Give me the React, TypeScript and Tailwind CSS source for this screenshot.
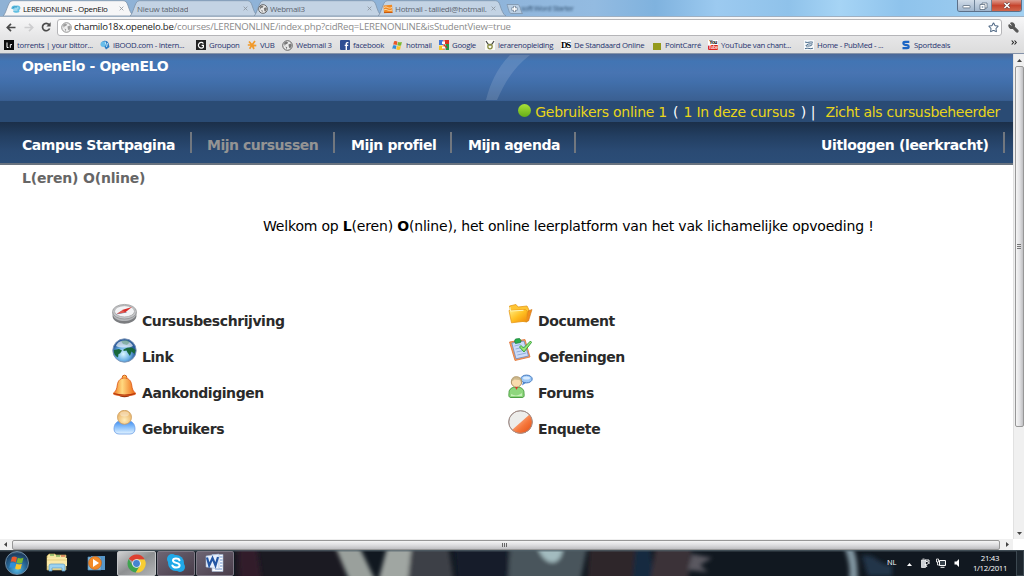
import React from "react";
import { Star, Wrench } from "lucide-react";

const ui = "font-['Open_Sans','Noto_Sans',sans-serif]";
const verdana = "font-['DejaVu_Sans',Verdana,sans-serif]";

/* ---------- small icons ---------- */

function GlobeIcon({ className = "size-[11px]" }: { className?: string }) {
  return (
    <svg viewBox="0 0 11 11" className={`shrink-0 ${className}`}>
      <circle cx="5.5" cy="5.5" r="4.8" fill="#e9e9e9" stroke="#555" strokeWidth="0.9" />
      <path d="M2 3l2-1.4 2 .6-.6 1.6-2 .6-.5 1.800zM6.400 4.400l2.600-.8.8 2-1.600 2.800-1.200-.8zM3.400 6.600l1.800.6-.4 2.200z" fill="#777" />
    </svg>
  );
}

function CloudFavicon() {
  return (
    <svg viewBox="0 0 10 10" className="size-[10px] shrink-0">
      <path d="M.5 4.500C0 2 3 .8 5 1.800c3-1 5 1.200 4.300 3L8 6.500C10 8 6 9.500 3.500 8.500 1.500 8 2 6.500 3 6z" fill="#62bfe2" />
      <path d="M3.500 4h4M2.500 6h4" stroke="#e3f6fc" strokeWidth="0.900" />
      <path d="M1 4.500C2 2.500 5 3 6 3" stroke="#2791bd" strokeWidth="0.900" fill="none" />
    </svg>
  );
}

function HotmailIcon() {
  return (
    <svg viewBox="0 0 10 10" className="size-[10px] shrink-0">
      <path d="M.5 1.500L9 .8l.6 7.700-8.600.7z" fill="#f08a24" />
      <path d="M1 3.500c3-2 4 2 8 0M1 6c3-2 4 2 8 0" stroke="#ffe2b8" strokeWidth="0.900" fill="none" />
      <path d="M1 8.500h8.500" stroke="#c65a12" strokeWidth="1" />
    </svg>
  );
}

function WindowsFlag({ className }: { className: string }) {
  return (
    <svg viewBox="0 0 12 12" className={`shrink-0 ${className}`}>
      <path d="M2.200 1.500C3.600.8 4.800 1 6 1.800L5.100 5.600C4 4.800 2.600 4.700 1.300 5.200z" fill="#e8582a" />
      <path d="M6.600 2.100c1.300.7 2.700.6 4.200 0L9.900 5.900c-1.500.6-2.900.5-4.200-.1z" fill="#7cb82f" />
      <path d="M1.100 5.900c1.400-.5 2.700-.4 3.800.4L4 10.100c-1.100-.8-2.400-.9-3.800-.4z" fill="#2f8ed8" />
      <path d="M5.500 6.500c1.300.7 2.800.7 4.200.1l-.9 3.800c-1.400.6-2.900.6-4.200-.2z" fill="#fbc42a" />
    </svg>
  );
}

const bookmarks: { label: string; box: string; icon: React.ReactNode }[] = [
  {
    label: "torrents | your bittor...",
    box: "w-[96px]",
    icon: (
      <svg viewBox="0 0 10 10" className="size-[10px] shrink-0">
        <rect width="10" height="10" fill="#0c0c0c" />
        <path d="M3 2.500v5h1.500M6.300 7.800V4.600h1.700" stroke="#fff" fill="none" strokeWidth="1" />
      </svg>
    ),
  },
  {
    label: "iBOOD.com - Intern...",
    box: "w-[96px]",
    icon: (
      <svg viewBox="0 0 10 10" className="size-[10px] shrink-0">
        <path d="M1 4a4 4 0 0 1 7.500-1L9.500 7 6 9.500 4.500 7z" fill="#2d7cc4" />
        <circle cx="3.200" cy="4.200" r="2.700" fill="#67bdea" />
        <path d="M5 1.500l1 3M7.500 3l-1 4" stroke="#d8f0fc" strokeWidth="0.900" />
      </svg>
    ),
  },
  {
    label: "Groupon",
    box: "w-[51px]",
    icon: (
      <svg viewBox="0 0 10 10" className="size-[10px] shrink-0">
        <rect width="10" height="10" fill="#222" />
        <path d="M7.400 3.500A2.800 2.800 0 1 0 7.400 7V5.300H5.600" stroke="#fff" fill="none" strokeWidth="1.200" />
      </svg>
    ),
  },
  {
    label: "VUB",
    box: "w-[35px]",
    icon: (
      <svg viewBox="0 0 10 10" className="size-[10px] shrink-0">
        <path d="M5 5L2 1.500M5 5l3-4M5 5H.8M5 5l4.300.6M5 5L2.600 8.800M5 5l2 4" stroke="#f19a2b" strokeWidth="1.700" />
      </svg>
    ),
  },
  { label: "Webmail 3", box: "w-[58px]", icon: <GlobeIcon /> },
  {
    label: "facebook",
    box: "w-[52px]",
    icon: (
      <svg viewBox="0 0 10 10" className="size-[10px] shrink-0">
        <rect width="10" height="10" rx="1" fill="#2f4f93" />
        <path d="M8.400 2.600H7.300q-1 0-1 1V10M4.700 5.400h3.500" stroke="#fff" fill="none" strokeWidth="1.400" />
      </svg>
    ),
  },
  { label: "hotmail", box: "w-[47px]", icon: <WindowsFlag className="size-[11px]" /> },
  {
    label: "Google",
    box: "w-[46px]",
    icon: (
      <svg viewBox="0 0 10 10" className="size-[10px] shrink-0">
        <path d="M0 0h10v10H0z" fill="#fff" />
        <path d="M0 0h4v5H0z" fill="#3f74d6" />
        <path d="M6 0h4v4H6z" fill="#d83223" />
        <path d="M0 5.500h4V10H0z" fill="#f2c324" />
        <path d="M6.500 4H10v6H6.500z" fill="#229a48" />
        <path d="M5 0v10M5 5l3 3" stroke="#d83223" strokeWidth="1.200" />
        <path d="M3 1.500h3v2.500H3zM3 6.500h3v2H3z" fill="#fff" />
      </svg>
    ),
  },
  {
    label: "lerarenopleiding",
    box: "w-[76px]",
    icon: (
      <svg viewBox="0 0 10 10" className="size-[10px] shrink-0">
        <rect width="10" height="10" fill="#fbfbf5" />
        <path d="M1 1l2 3 2 1 2-1 2-3" stroke="#444" fill="none" strokeWidth="1.200" />
        <circle cx="5" cy="6.600" r="2.200" fill="none" stroke="#8c8f40" strokeWidth="1.300" />
      </svg>
    ),
  },
  {
    label: "De Standaard Online",
    box: "w-[91px]",
    icon: (
      <span className="w-[10px] shrink-0 bg-white font-['Liberation_Serif',serif] text-[9px] leading-[10px] font-bold tracking-[-1.2px] text-black">
        DS
      </span>
    ),
  },
  {
    label: "PointCarré",
    box: "w-[56px]",
    icon: <span className="mt-[2px] mr-px ml-px h-[7px] w-[8px] shrink-0 bg-[#949a1c]" />,
  },
  {
    label: "YouTube van chant...",
    box: "w-[96px]",
    icon: (
      <span className="flex w-[10px] shrink-0 flex-col items-center overflow-hidden bg-white font-['Liberation_Sans',sans-serif] text-[5px] leading-[5px] font-bold tracking-[-0.5px] text-black">
        <span>You</span>
        <span className="w-full rounded-[1px] bg-[#d7261e] text-center text-[#ffd9d6]">Tube</span>
      </span>
    ),
  },
  {
    label: "Home - PubMed - ...",
    box: "w-[97px]",
    icon: (
      <svg viewBox="0 0 10 10" className="size-[10px] shrink-0">
        <rect width="10" height="10" fill="#f5f8fa" />
        <path d="M1 2c3 1.500 5-1 8 .3M8.500 4C6 3.500 2.500 4 1.800 6M8.200 4.500C7 6.500 4 6 2 6M1 8.700c3-1.500 5 1 8-.5" stroke="#4a6c8c" fill="none" strokeWidth="1" />
      </svg>
    ),
  },
  {
    label: "Sportdeals",
    box: "w-[60px]",
    icon: (
      <svg viewBox="0 0 10 10" className="size-[10px] shrink-0">
        <path d="M8.300 1.900H4C1.800 1.900 1.800 4.600 4 4.800l2 .3c2.300.3 2.200 3.100 0 3.100H1.500" stroke="#1d66c4" fill="none" strokeWidth="2.200" />
      </svg>
    ),
  },
];

/* ---------- browser chrome ---------- */

function Tab({ title, icon, active, box, text }: { title: string; icon?: React.ReactNode; active?: boolean; box: string; text: string }) {
  return (
    <div className={`relative h-full shrink-0 ${box}`}>
      <svg viewBox="0 0 132 16" preserveAspectRatio="none" className="absolute inset-0 size-full">
        <path
          d="M0 16C3 14 5 2.500 8 1.200L10 .7H121c3 0 4 2 5 5s3 9 6 10.300z"
          fill={active ? "#f6f6f7" : "#c3d3e4"}
          stroke="#7d93aa"
          strokeWidth="0.800"
        />
      </svg>
      <div className={`relative flex h-full items-center pt-px ${text}`}>
        {icon}
        <span className={`ml-[2px] overflow-hidden text-[8px] leading-[12px] whitespace-nowrap ${active ? "text-[#111]" : "text-[#5c6570]"}`}>{title}</span>
        <svg viewBox="0 0 6 6" className="mr-[10px] ml-auto size-[5px] shrink-0">
          <path d="M.8.8l4.400 4.400M5.200.8L.8 5.200" stroke="#8c949c" strokeWidth="1" />
        </svg>
      </div>
    </div>
  );
}

function TitleBar() {
  return (
    <div className="flex h-[16px] shrink-0 items-stretch overflow-hidden bg-[linear-gradient(90deg,#8fb2d5_0%,#8fb4da_48%,#93bbe1_58%,#7fb2de_64%,#9ccaf0_70%,#8fc2ea_77%,#a6d4f5_82%,#8ec3ec_88%,#a3d0f1_100%)]">
      <div className="relative z-10 flex pl-[3px]">
        <Tab active box="w-[131px]" text="pl-[8px] tracking-[-0.34px]" icon={<CloudFavicon />} title="LERENONLINE - OpenElo" />
        <Tab box="-ml-[4px] w-[128px]" text="pl-[5px] tracking-[-0.22px]" title="Nieuw tabblad" />
        <Tab box="-ml-[4px] w-[128px]" text="pl-[4px] tracking-[-0.32px]" icon={<GlobeIcon className="size-[10px]" />} title="Webmail3" />
        <Tab box="-ml-[4px] w-[128px]" text="pl-[5px] tracking-[-0.26px]" icon={<HotmailIcon />} title="Hotmail - talliedi@hotmail." />
        <svg viewBox="0 0 17 10" className="mt-[4px] h-[10px] w-[17px]">
          <path d="M1 .5h11c2 0 3 8 4.500 9H5C3 9.500 2 3 1 .5z" fill="#b8cee4" stroke="#7d93aa" strokeWidth="0.800" />
          <path d="M8.500 2v6M5.500 5h6" stroke="#6b7c90" strokeWidth="2.800" />
          <path d="M8.500 2.500v5M6 5h5" stroke="#fff" strokeWidth="1.500" />
        </svg>
      </div>
      <span className="mt-[2px] -ml-[2px] text-[7.500px] leading-[12px] font-semibold tracking-[-0.6px] whitespace-nowrap text-[#31506f] opacity-75 blur-[1.2px]">soft Word Starter</span>
      <div className="mr-[2px] ml-auto flex h-[12px] overflow-hidden rounded-b-[3px] border border-t-0 border-[#5c7089] text-white">
        <div className="flex w-[17px] items-center justify-center border-r border-[#6f8398] bg-gradient-to-b from-[#d2dde9] to-[#a0b5cc]">
          <svg viewBox="0 0 9 6" className="h-[6px] w-[9px]"><rect x="1" y="2.500" width="7" height="2.400" rx=".5" fill="#fff" stroke="#4b5b70" strokeWidth=".7" /></svg>
        </div>
        <div className="flex w-[17px] items-center justify-center border-r border-[#6f8398] bg-gradient-to-b from-[#d2dde9] to-[#a0b5cc]">
          <svg viewBox="0 0 9 8" className="h-[8px] w-[9px]"><path d="M3 1h5v5H3z" fill="#fff" stroke="#4b5b70" strokeWidth=".7" /><path d="M1 2.500h5v5H1z" fill="#fff" stroke="#4b5b70" strokeWidth=".7" /><path d="M2.700 4.200h1.600v1.600H2.700z" fill="#8196ae" /></svg>
        </div>
        <div className="flex w-[29px] items-center justify-center bg-gradient-to-b from-[#dc9a8d] via-[#c6442e] to-[#d0664c]">
          <svg viewBox="0 0 8 7" className="h-[7px] w-[8px]"><path d="M1.500 1l5 5M6.500 1l-5 5" stroke="#5d3a3a" strokeWidth="2.700" /><path d="M1.500 1l5 5M6.500 1l-5 5" stroke="#fff" strokeWidth="1.600" /></svg>
        </div>
      </div>
    </div>
  );
}

function Toolbar() {
  return (
    <div className="flex h-[21px] shrink-0 items-center border-t border-[#9fb0c2] bg-gradient-to-b from-[#f7f7f8] to-[#e6e6e7] pl-[6px]">
      <svg viewBox="0 0 10 9" className="h-[9px] w-[10px]"><path d="M9.500 4.500H1.500M5 .8L1.300 4.500 5 8.200" fill="none" stroke="#4a4a4a" strokeWidth="1.700" /></svg>
      <svg viewBox="0 0 10 9" className="ml-[8px] h-[9px] w-[10px]"><path d="M.5 4.500h8M5 .8l3.700 3.700L5 8.200" fill="none" stroke="#cdcdcf" strokeWidth="1.700" /></svg>
      <svg viewBox="0 0 10 10" className="ml-[7px] size-[10px]"><path d="M8 2.600A3.700 3.700 0 1 0 8.600 6.500" fill="none" stroke="#4a4a4a" strokeWidth="1.700" /><path d="M9.600.3v4.200H5.400z" fill="#4a4a4a" /></svg>
      <div className="ml-[6px] flex h-[17px] w-[945px] items-center rounded-[3px] border border-[#b5b5b8] bg-white pl-[3px]">
        <GlobeIcon className="size-[11px] opacity-70" />
        <span className="ml-[2px] text-[9.600px] leading-[14px] tracking-[-0.21px] whitespace-nowrap text-[#8b8b8b]">
          <span className="text-[#1c1c1c]">chamilo18x.openelo.be</span>/courses/LERENONLINE/index.php?cidReq=LERENONLINE&amp;isStudentView=true
        </span>
        <Star className="mr-[2px] ml-auto size-[11px] text-[#526a86]" strokeWidth={2.2} />
      </div>
      <Wrench className="ml-[6px] size-[11px] -scale-x-100 fill-[#555] text-[#555]" strokeWidth={2.5} />
    </div>
  );
}

function BookmarksBar() {
  return (
    <div className="flex h-[17px] shrink-0 items-center border-b border-[#8492a8] bg-gradient-to-b from-[#e6e6e7] to-[#dcdcdc] pl-[4px]">
      {bookmarks.map((b) => (
        <div key={b.label} className={`flex shrink-0 items-center gap-[3px] ${b.box}`}>
          {b.icon}
          <span className="text-[7.800px] leading-[11px] tracking-[-0.28px] whitespace-nowrap text-[#26336f]">{b.label}</span>
        </div>
      ))}
      <svg viewBox="0 0 6 5" className="mr-[7px] mb-[6px] ml-auto h-[5px] w-[6px]">
        <path d="M.7.500l1.800 2L.7 4.500M3.500.5l1.800 2-1.800 2" fill="none" stroke="#222" strokeWidth="1.100" />
      </svg>
    </div>
  );
}

/* ---------- page ---------- */

function NavItem({ children, box, muted }: { children: React.ReactNode; box: string; muted?: boolean }) {
  return (
    <div className={`h-[21px] shrink-0 border-r-2 border-[#71777f] pt-[5px] leading-[17px] whitespace-nowrap ${box} ${muted ? "text-[#949494]" : "text-white"}`}>{children}</div>
  );
}

function PageHeader() {
  return (
    <header className="text-[14px] font-bold">
      <div className="relative h-[47px] bg-[linear-gradient(180deg,#4b6796_0%,#4275b4_15%,#4874b2_40%,#416fab_60%,#3b6092_98%,#335a8e_100%)] pt-[4px] pl-[22px] text-white">
        <svg viewBox="0 0 60 47" className="absolute top-0 left-[480px] h-[47px] w-[60px]">
          <path d="M6 46C10 30 17 14 30 1H50C34 13 25 28 17 46z" fill="#fff" opacity=".13" />
        </svg>
        <div className="leading-[17px] tracking-[-0.35px] whitespace-nowrap">OpenElo - OpenELO</div>
      </div>
      <div className="flex h-[21px] items-center justify-end bg-[#2a4b74] pt-px pr-[13px] text-[14px] font-normal whitespace-pre text-[#e9d51a]">
        <span className="mr-[4px] mb-[3px] size-[13px] rounded-full bg-gradient-to-b from-[#a9e238] to-[#65ad17]" />
        <span className="tracking-[-0.26px]">Gebruikers online 1</span>
        <span className="ml-[6px] text-white">(</span>
        <span className="ml-[5px] tracking-[-0.2px]">1 In deze cursus</span>
        <span className="ml-[6px] text-white">) |</span>
        <span className="ml-[10px] tracking-[-0.31px]">Zicht als cursusbeheerder</span>
      </div>
      <nav className="flex h-[43px] border-b-2 border-[#69737f] bg-[linear-gradient(180deg,#1b2f49_0%,#233f62_35%,#2a4a73_70%,#2b4d77_100%)] pt-[10px] pl-[22px]">
        <NavItem box="w-[170px] tracking-[-0.45px]">Campus Startpagina</NavItem>
        <NavItem muted box="w-[143px] pl-[15px] tracking-[-0.48px]">Mijn cursussen</NavItem>
        <NavItem box="w-[117px] pl-[16px] tracking-[-0.39px]">Mijn profiel</NavItem>
        <NavItem box="w-[124px] pl-[16px] tracking-[-0.43px]">Mijn agenda</NavItem>
        <div className="mr-[8px] ml-auto">
          <NavItem box="w-[184px] tracking-[-0.37px]">Uitloggen (leerkracht)</NavItem>
        </div>
      </nav>
    </header>
  );
}

const tools: { left: string; leftIcon: React.ReactNode; right: string; rightIcon: React.ReactNode }[] = [
  {
    left: "Cursusbeschrijving",
    leftIcon: (
      <svg viewBox="0 0 25 25" className="size-[25px]">
        <path d="M.6 10v4.500c1 9.500 22.500 9.500 23.800 0V10z" fill="#7b7d80" />
        <path d="M1 11v2c2 8 20 8 23 0v-2z" fill="#b4b6b9" />
        <ellipse cx="12.500" cy="9.700" rx="12" ry="7.300" fill="#c5c7ca" stroke="#888" strokeWidth=".6" />
        <ellipse cx="12.500" cy="9.300" rx="10" ry="5.600" fill="#f3f4f6" stroke="#999" strokeWidth=".6" />
        <path d="M4 12.500l7-4.500 4 2.500z" fill="#6b87ad" />
        <path d="M20 5l-10 3 3 2.500z" fill="#d92c28" />
        <path d="M4.500 12l6-4 3 2.500z" fill="#e15a50" />
      </svg>
    ),
    right: "Document",
    rightIcon: (
      <svg viewBox="0 0 25 25" className="size-[25px]">
        <defs><linearGradient id="fold" x1="0" y1="0" x2="1" y2="1"><stop stopColor="#fff08a" /><stop offset=".5" stopColor="#ffc021" /><stop offset="1" stopColor="#f0860b" /></linearGradient></defs>
        <path d="M1.500 4L8 2.500l2 2.500 9-1 2 4-2 12L4 18z" fill="#ffc533" stroke="#e39b1c" strokeWidth=".8" />
        <path d="M20 9l4-1.500L20.500 19l-3 .5z" fill="#f18c1d" stroke="#cf7510" strokeWidth=".6" />
        <path d="M1 8.500l16.500-1 1.800 2L18.500 19 3.500 20.800z" fill="url(#fold)" stroke="#e89a1b" strokeWidth=".8" />
        <path d="M2 5l.5 4 13-.7" fill="none" stroke="#fff6b4" strokeWidth="1" />
      </svg>
    ),
  },
  {
    left: "Link",
    leftIcon: (
      <svg viewBox="0 0 25 25" className="size-[25px]">
        <defs><radialGradient id="earth" cx=".45" cy=".65"><stop stopColor="#d9f7ff" /><stop offset=".6" stopColor="#68aee4" /><stop offset="1" stopColor="#2a5c9c" /></radialGradient></defs>
        <circle cx="12.500" cy="12.500" r="11.700" fill="url(#earth)" stroke="#7d94b4" strokeWidth=".9" />
        <path d="M2 12l5-1 3 1.500-2 3-1.500.5-.5 3.500C3 18 1.500 15.500 2 12zM11.500 11.500l4-2 4.500 0 3.500 2.500-1 4-3-2.500-1.500 4.500-2.500-3.500-1-2-3 .5z" fill="#17683b" />
        <path d="M4 8C6 1 18 1 21 8c-4 2-13 2-17 0z" fill="#fff" opacity=".65" />
        <path d="M9 3l6-1 3 2-3 3-4-1z" fill="#5f9c7a" opacity=".55" />
      </svg>
    ),
    right: "Oefeningen",
    rightIcon: (
      <svg viewBox="0 0 25 25" className="size-[25px]">
        <path d="M1.500 4L17 1.500 22 19 7 22.500z" fill="#f8a05a" stroke="#de6f35" strokeWidth=".8" />
        <path d="M3.800 5L16 3l4.500 15L8 20.800z" fill="#cbdcf8" stroke="#6c86c3" strokeWidth=".8" />
        <path d="M6.500 8l6-1.500M7.500 11l9-2M8.500 14l9-2M9.300 17l9-2" stroke="#8ba6d9" strokeWidth=".9" />
        <path d="M6.500 3l1-2 4-.5 1.500 2-.5 2-5 1z" fill="#28ad4c" stroke="#137e33" strokeWidth=".7" />
        <path d="M11.500 9l1.500-1.500L15.500 10 22.500 3l1 1.500-7.500 9.500z" fill="#9ae575" stroke="#2b9c35" strokeWidth=".9" />
      </svg>
    ),
  },
  {
    left: "Aankondigingen",
    leftIcon: (
      <svg viewBox="0 0 25 25" className="size-[25px]">
        <defs><linearGradient id="bell"><stop stopColor="#f0741b" /><stop offset=".4" stopColor="#ffd980" /><stop offset="1" stopColor="#ed5f0c" /></linearGradient></defs>
        <ellipse cx="12.500" cy="20.800" rx="6" ry="2.500" fill="#93300f" />
        <circle cx="12.500" cy="3.500" r="2.300" fill="#ffbb56" stroke="#d35c19" />
        <path d="M1 19.500c3-2 3.800-4.500 4.300-8.500C6 6 9 4 12.500 4S19 6 19.700 11c.5 4 1.300 6.500 4.300 8.500-1 3-22 3-23 0z" fill="url(#bell)" stroke="#dc5714" strokeWidth=".8" />
        <path d="M2 19.500c5 2 16 2 21 0" fill="none" stroke="#b8380e" strokeWidth="1.200" />
      </svg>
    ),
    right: "Forums",
    rightIcon: (
      <svg viewBox="0 0 25 25" className="size-[25px]">
        <path d="M15.500 6.500l-1.500 5 4.500-3z" fill="#4c86d4" />
        <ellipse cx="18.500" cy="5" rx="5.700" ry="3.900" fill="#9cc8f8" stroke="#4579bd" />
        <ellipse cx="18.500" cy="4" rx="3.500" ry="1.500" fill="#d7ebff" />
        <path d="M1 18.500C1 15 4 13 8.500 13s7.500 2 7.500 5.500c0 2 1 5-2 5H3c-3 0-2-3-2-5z" fill="#8ed77d" stroke="#3f9737" strokeWidth=".9" />
        <path d="M3 20c4 2 7 2 11-1v3H3z" fill="#d3f5c5" opacity=".8" />
        <circle cx="8.500" cy="8" r="5.200" fill="#f9dcae" stroke="#a98758" strokeWidth=".9" />
        <path d="M3.200 8C3 2 8 1.500 11 3c3 1.500 3 4 2.500 6l-2-3-5-.5z" fill="#b9a77c" opacity=".65" />
        <path d="M7 13h3l-1.500 3z" fill="#d43e2d" />
      </svg>
    ),
  },
  {
    left: "Gebruikers",
    leftIcon: (
      <svg viewBox="0 0 25 25" className="size-[25px]">
        <defs><linearGradient id="body" x2="0" y2="1"><stop stopColor="#3f8df0" /><stop offset=".5" stopColor="#8ec3fc" /><stop offset="1" stopColor="#e4f4ff" /></linearGradient><radialGradient id="head" cy=".7"><stop stopColor="#ffedbb" /><stop offset="1" stopColor="#eebe76" /></radialGradient></defs>
        <path d="M2 19c0-5 3-8 6-8h9c3 0 6 3 6 8 0 3-2 5-5 5H7c-3 0-5-2-5-5z" fill="url(#body)" stroke="#6c9ee6" strokeWidth=".8" />
        <circle cx="12.500" cy="7.300" r="7" fill="url(#head)" stroke="#cb9c5f" strokeWidth=".8" />
        <ellipse cx="12.500" cy="4" rx="4.500" ry="2.500" fill="#fff" opacity=".35" />
      </svg>
    ),
    right: "Enquete",
    rightIcon: (
      <svg viewBox="0 0 25 25" className="size-[25px]">
        <defs><linearGradient id="pie" x1="0.300" y1="0.300" x2="1" y2="1"><stop stopColor="#f9a57c" /><stop offset=".4" stopColor="#f5763a" /><stop offset="1" stopColor="#e04a12" /></linearGradient></defs>
        <ellipse cx="12.500" cy="12" rx="11.800" ry="11.300" fill="#ededeb" stroke="#8d8d8d" strokeWidth=".9" />
        <path d="M4 20L21.500 4.500c5 6 3 15-4 18C12 24.500 7 23.500 4 20z" fill="url(#pie)" />
        <ellipse cx="12.500" cy="12" rx="11.800" ry="11.300" fill="none" stroke="#a9918a" strokeWidth=".9" />
      </svg>
    ),
  },
];

function ToolLink({ icon, label, box }: { icon: React.ReactNode; label: string; box: string }) {
  return (
    <div className={`flex h-[36px] items-start ${box}`}>
      {icon}
      <span className="mt-[11px] ml-[5px] text-[14px] leading-[17px] font-bold tracking-[-0.43px] whitespace-nowrap text-[#2a2a2a]">{label}</span>
    </div>
  );
}

function VerticalScrollbar() {
  return (
    <div className="flex w-[11px] shrink-0 flex-col items-center border-l border-[#e1e1e1] bg-[#f0f0f0]">
      <svg viewBox="0 0 5 3" className="mt-[5px] h-[3px] w-[5px] shrink-0"><path d="M2.500 0L5 3H0z" fill="#444" /></svg>
      <div className="mt-[4px] flex h-[361px] w-[9px] shrink-0 flex-col items-center justify-center gap-px rounded-[2px] border border-[#979797] bg-gradient-to-r from-[#f5f5f5] via-[#e3e3e5] to-[#bfbfc2]">
        <span className="h-px w-[4px] bg-[#777]" />
        <span className="h-px w-[4px] bg-[#777]" />
        <span className="h-px w-[4px] bg-[#777]" />
      </div>
      <svg viewBox="0 0 5 3" className="mt-auto mb-[4px] h-[3px] w-[5px] shrink-0"><path d="M2.500 3L5 0H0z" fill="#444" /></svg>
    </div>
  );
}

function HorizontalScrollbar() {
  return (
    <div className="flex h-[11px] shrink-0 items-center bg-[#f0f0f0]">
      <svg viewBox="0 0 3 5" className="ml-[4px] h-[5px] w-[3px]"><path d="M0 2.500L3 0v5z" fill="#444" /></svg>
      <div className="ml-[5px] flex h-[10px] w-[988px] items-center justify-center gap-px rounded-[2px] border border-[#979797] bg-gradient-to-b from-[#f5f5f5] via-[#dedee0] to-[#bfbfc2] pr-[3px]">
        <span className="h-[4px] w-px bg-[#666]" />
        <span className="h-[4px] w-px bg-[#666]" />
        <span className="h-[4px] w-px bg-[#666]" />
      </div>
      <svg viewBox="0 0 3 5" className="ml-[6px] h-[5px] w-[3px]"><path d="M3 2.500L0 0v5z" fill="#444" /></svg>
      <span className="ml-auto h-full w-[11px] bg-white" />
    </div>
  );
}

/* ---------- taskbar ---------- */

function TaskButton({ children, box }: { children: React.ReactNode; box: string }) {
  return <div className={`flex h-[25px] items-center justify-center rounded-[2px] border ${box}`}>{children}</div>;
}

function Taskbar() {
  return (
    <div className="relative flex h-[26px] shrink-0 items-center overflow-hidden bg-[#111820] text-white">
      <svg viewBox="0 0 1024 26" className="absolute inset-0 size-full">
        <defs><filter id="soft" x="-20%" width="140%"><feGaussianBlur stdDeviation="2" /></filter></defs>
        <rect x="235" width="110" height="26" fill="#1b1a22" />
        <g filter="url(#soft)">
          <path d="M238 -6h18l6 38h-22z" fill="#321f2b" />
          <path d="M334 -6h24l18 38h-26z" fill="#9aa09c" />
          <path d="M388 -6h24l-4 38h-30z" fill="#a0a6a2" />
          <path d="M412 -6h36l6 38h-46z" fill="#3e3f47" />
          <path d="M454 -6h55v38h-52z" fill="#151d29" />
          <path d="M510 -6h78l-8 38h-72z" fill="#48555c" />
          <path d="M537 -4h26c0 20-18 24-26 0z" fill="#a3bbbf" />
          <path d="M590 -6h50l-7 38h-46z" fill="#2e252c" />
          <path d="M636 -6h14l4 38h-22z" fill="#192a40" />
          <path d="M656 -6h36l-4 38h-38z" fill="#3a3339" />
          <path d="M692 4l20 4-12 7 8 7-20-2z" fill="#5a5961" />
          <path d="M844 -4h8c6 12 5 21 6 34h-9c2-12-1-22-5-34z" fill="#8195a0" />
          <path d="M862 6c14-4 18 12 30 8v12h-24z" fill="#24364a" />
        </g>
        <rect width="1024" height="1.500" fill="#52626b" opacity=".7" />
      </svg>
      <div className="relative flex w-full items-center pl-[5px]">
        <div className="flex size-[24px] items-center justify-center rounded-full border border-[#6d8ba3] bg-[radial-gradient(circle_at_50%_80%,#57b8e2_0%,#276696_45%,#1c3d5f_75%,#7894aa_100%)]">
          <WindowsFlag className="size-[16px]" />
        </div>
        <svg viewBox="0 0 22 20" className="ml-[17px] h-[20px] w-[22px]">
          <path d="M1 3l2-2h6l1 1h10v15H1z" fill="#f5e6a2" stroke="#b99d51" strokeWidth=".7" />
          <path d="M4 2h4M10 3h4" stroke="#4da14b" strokeWidth="1.200" /><path d="M15 3h4" stroke="#d65a44" strokeWidth="1.200" />
          <path d="M1 5h20v8H1z" fill="#fae9a8" /><path d="M1 7h20" stroke="#dac46d" strokeWidth=".7" />
          <path d="M3 18v-5q0-2 2-2h12q2 0 2 2v5h-3v-3H6v3z" fill="#9dd3f0" stroke="#5b9bc4" strokeWidth=".7" />
        </svg>
        <svg viewBox="0 0 19 18" className="ml-[19px] h-[18px] w-[19px]">
          <path d="M4 2h14v14H4z" fill="#5797c9" /><path d="M1 3h13v13H1z" fill="#84bce0" stroke="#4f87b1" strokeWidth=".7" />
          <circle cx="8" cy="9" r="6.500" fill="#f28a27" stroke="#bd5c16" strokeWidth=".6" /><path d="M6 5l6 4-6 4z" fill="#fff" />
        </svg>
        <TaskButton box="ml-[11px] w-[39px] border-[#c3c5c7] bg-gradient-to-br from-[#d0d1d2] via-[#8e9092] to-[#b2b4b6]">
          <svg viewBox="0 0 20 20" className="size-[19px]">
            <path d="M10 10L1.800 5.300A9.500 9.500 0 0 1 18.600 5.700H10z" fill="#dd4030" />
            <path d="M10 10l-3.900 2.300L1.800 5.300A9.500 9.500 0 0 0 9.200 19.500L14 12.200z" fill="#3ea34e" />
            <path d="M10 10V5.700h8.600A9.500 9.500 0 0 1 9.200 19.500l4.500-7.400z" fill="#f8cd32" />
            <circle cx="10" cy="10" r="4.600" fill="#f2f4f5" /><circle cx="10" cy="10" r="3.600" fill="#4684d0" />
          </svg>
        </TaskButton>
        <TaskButton box="ml-[1px] w-[38px] border-[#7d7884] bg-gradient-to-br from-[#6d6573] to-[#493d4a]">
          <svg viewBox="0 0 20 20" className="size-[20px]">
            <circle cx="10" cy="10" r="8" fill="#20a9e8" /><circle cx="6" cy="6" r="5" fill="#20a9e8" /><circle cx="14" cy="14" r="5" fill="#20a9e8" />
            <path d="M13.500 7.300C12.600 5 7 4.800 7 7.600c0 3 6.600 1.600 6.600 4.600 0 2.900-6 3-7.200.3" fill="none" stroke="#fff" strokeWidth="2" strokeLinecap="round" />
          </svg>
        </TaskButton>
        <TaskButton box="ml-[1px] w-[38px] border-[#7d7884] bg-gradient-to-br from-[#6d6573] to-[#493d4a]">
          <svg viewBox="0 0 20 20" className="size-[20px]">
            <path d="M7 1.500h11v17H7z" fill="#f8fbff" stroke="#9eb2ce" strokeWidth=".6" />
            <path d="M14.500 4h3M15 7h2.500M15 10h2.500M15 13h2.500M10 16h7" stroke="#6d94cf" strokeWidth="1" />
            <path d="M1 3l13-2v15L1 14z" fill="#e9f1fc" stroke="#9eb2ce" strokeWidth=".6" />
            <path d="M2 4.500l2.200 8L7.500 5l3 7.500 2.500-8.500" fill="none" stroke="#2457a4" strokeWidth="2.200" />
          </svg>
        </TaskButton>
        <span className="ml-auto text-[7.500px] tracking-[-0.3px]">NL</span>
        <svg viewBox="0 0 5 3" className="mt-[2px] ml-[11px] h-[3px] w-[5px]"><path d="M2.500 0L5 3H0z" fill="#fff" /></svg>
        <svg viewBox="0 0 10 10" className="ml-[8px] size-[10px]"><path d="M1.500 2h4v7.500h-4zM2.500 1h2" fill="#ccd0d4" stroke="#eee" strokeWidth=".8" /><path d="M6 3.500c3-1 3 3 0 3.500M5 2h4v4M5 6l2 3" fill="none" stroke="#fff" strokeWidth="1" /></svg>
        <svg viewBox="0 0 11 10" className="ml-[6px] h-[10px] w-[11px]"><path d="M3.500 2.500h6v5h-6zM4.500 9.300h4" fill="#38434c" stroke="#fff" strokeWidth="1" /><path d="M.5 1h2v3h-2zM1.500 4v3h2" fill="none" stroke="#fff" strokeWidth=".8" /></svg>
        <svg viewBox="0 0 6 10" className="ml-[7px] h-[10px] w-[6px]"><path d="M.5 3.500h2L5 1v8L2.500 6.500h-2z" fill="#fff" /></svg>
        <div className="ml-[10px] flex w-[40px] flex-col text-center text-[7.800px] leading-[10.500px] tracking-[-0.3px] whitespace-nowrap">
          <span>21:43</span>
          <span>1/12/2011</span>
        </div>
        <span className="ml-[6px] h-[26px] w-[8px] border border-[#3c4850] bg-[#1d262e]" />
      </div>
    </div>
  );
}

export default function App() {
  return (
    <div className={`flex h-[576px] w-[1024px] flex-col overflow-hidden bg-white ${ui}`}>
      <TitleBar />
      <Toolbar />
      <BookmarksBar />
      <div className="flex min-h-0 flex-1">
        <main className={`min-w-0 flex-1 ${verdana}`}>
          <PageHeader />
          <h1 className="mt-[5px] ml-[22px] text-[14px] leading-[17px] font-bold tracking-[-0.18px] whitespace-nowrap text-[#666]">L(eren) O(nline)</h1>
          <p className="mt-[31px] ml-[263px] text-[14px] leading-[17px] tracking-[-0.185px] whitespace-nowrap text-black">
            Welkom op <b>L</b>(eren) <b>O</b>(nline), het online leerplatform van het vak lichamelijke opvoeding !
          </p>
          <div className="mt-[67px] ml-[112px]">
            {tools.map((t) => (
              <div key={t.left} className="flex">
                <ToolLink box="w-[396px]" icon={t.leftIcon} label={t.left} />
                <ToolLink box="w-[200px]" icon={t.rightIcon} label={t.right} />
              </div>
            ))}
          </div>
        </main>
        <VerticalScrollbar />
      </div>
      <HorizontalScrollbar />
      <Taskbar />
    </div>
  );
}
